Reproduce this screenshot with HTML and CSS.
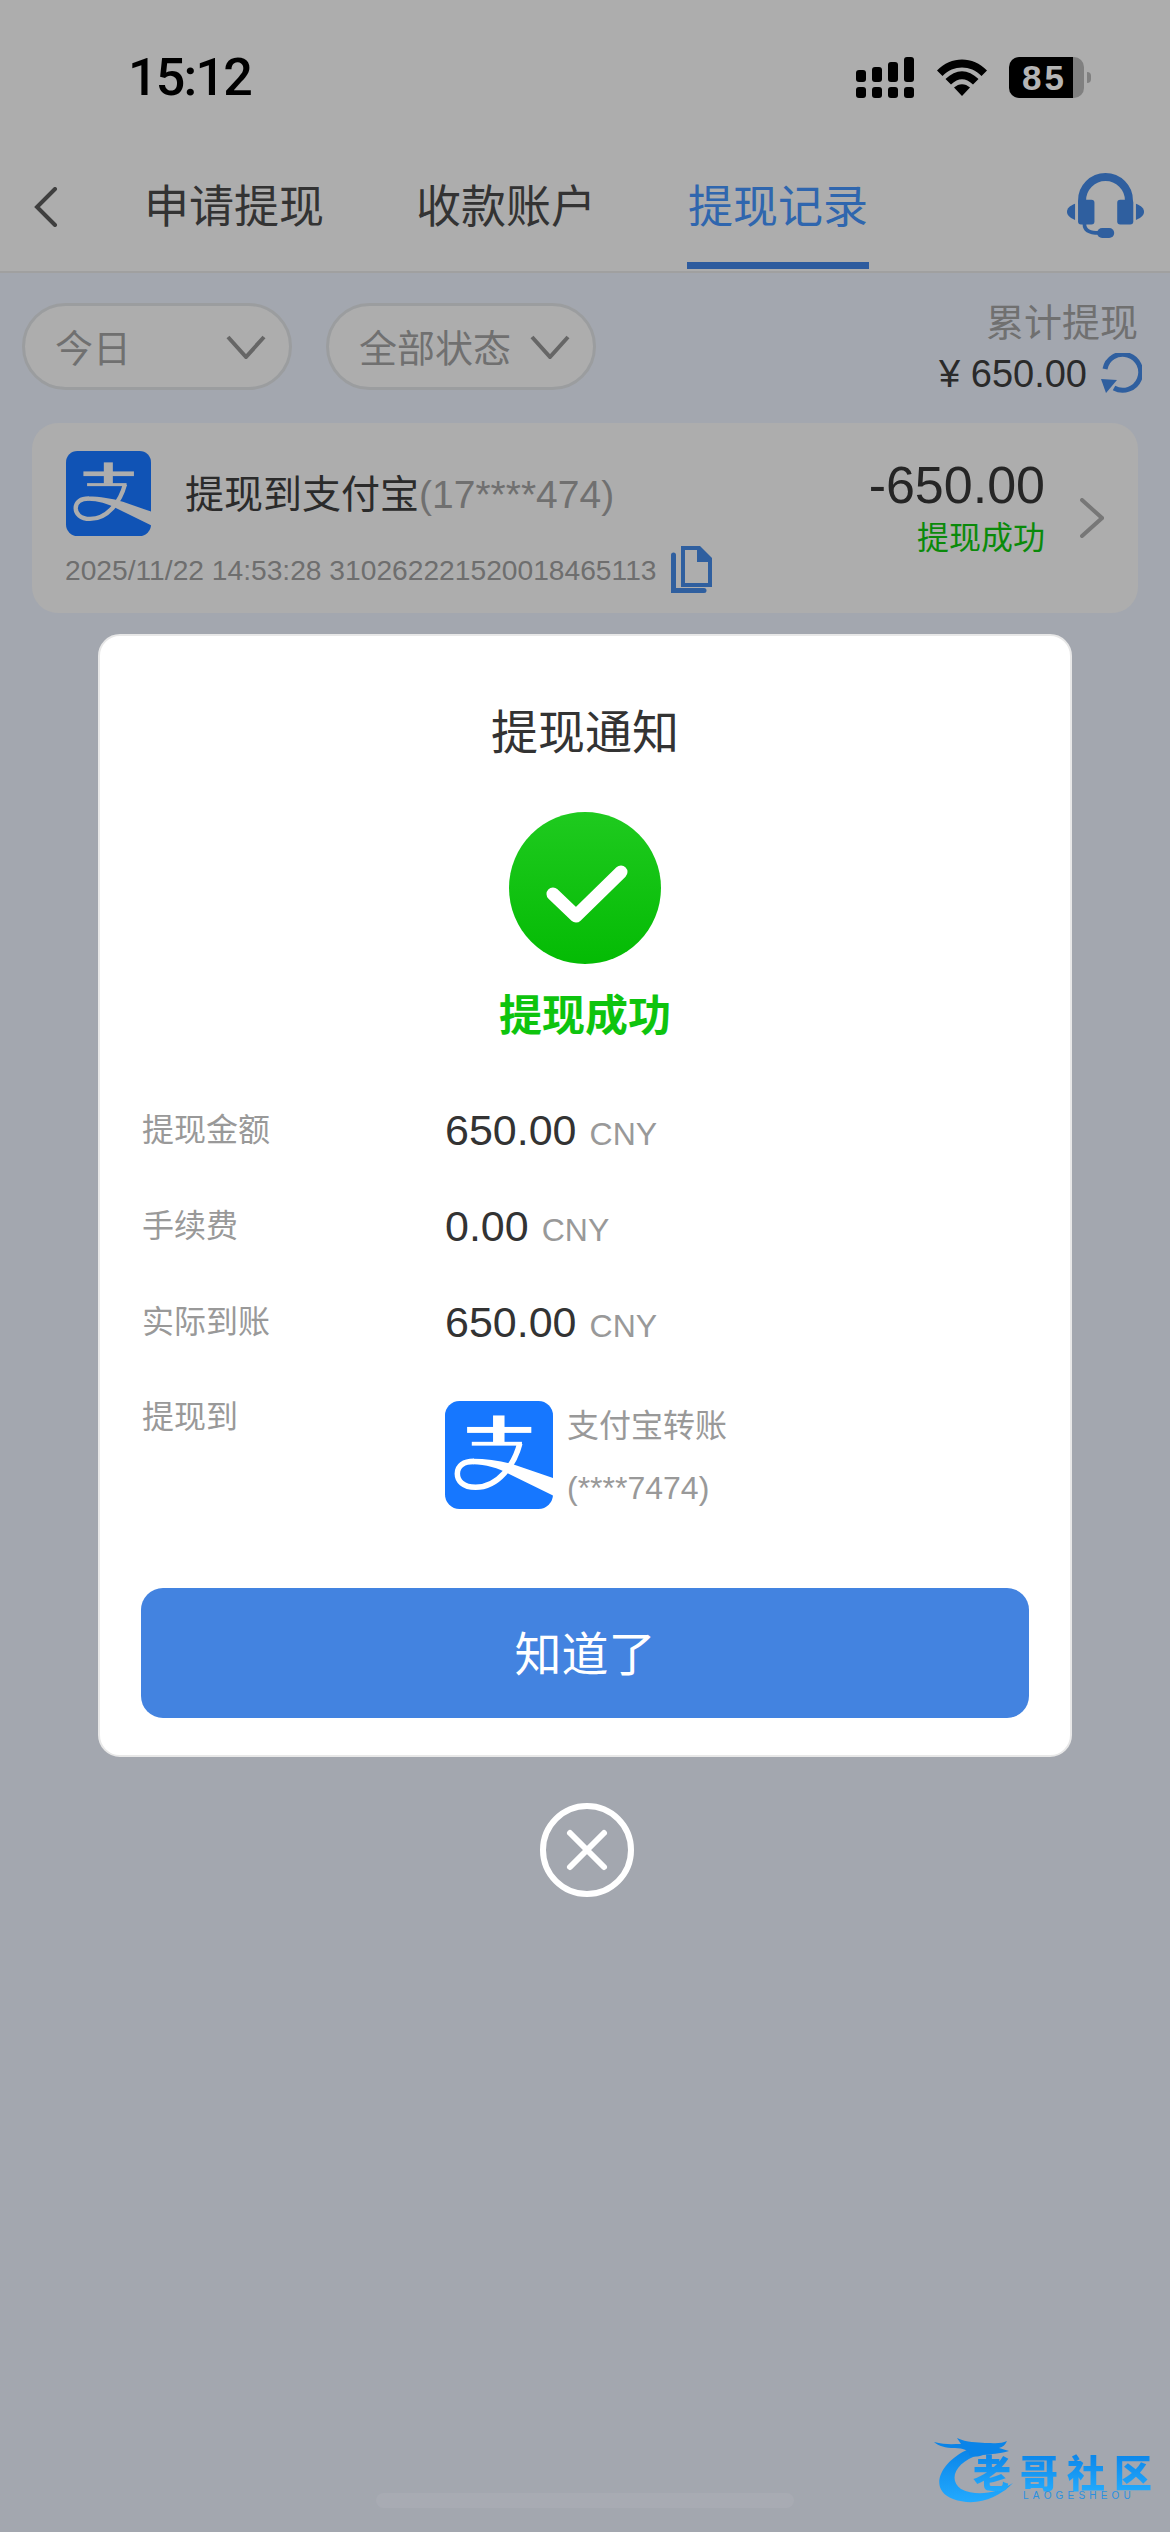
FILE: index.html
```html
<!DOCTYPE html>
<html lang="zh-CN">
<head>
<meta charset="utf-8">
<title>提现记录</title>
<link rel="stylesheet" href="styles.css">
</head>
<body>
<svg class="defs" width="0" height="0" aria-hidden="true">
  <defs>
    <symbol id="alipay-glyph" viewBox="0 0 254 254">
      <g fill="currentColor">
        <rect x="52" y="61" width="151" height="14"/>
        <rect x="113" y="34" width="27" height="64"/>
        <rect x="63" y="96" width="118" height="9"/>
        <path d="M66 136C100 136 140 142 170 152L254 181V222L152 172C125 158 95 149 66 149Z"/>
      </g>
      <path d="M176 100C163 150 125 203 72 203C42 203 29 187 29 171C29 152 44 142 68 142" fill="none" stroke="currentColor" stroke-width="13"/>
    </symbol>
  </defs>
</svg>
<div class="page">
  <header class="topbar">
    <div class="status">
      <span class="time">15:12</span>
      <div class="status-icons">
        <svg class="signal" viewBox="0 0 58 41" width="58" height="41">
          <g fill="#000">
            <rect x="0" y="30" width="10" height="11" rx="3"/><rect x="16" y="30" width="10" height="11" rx="3"/><rect x="32" y="30" width="10" height="11" rx="3"/><rect x="48" y="30" width="10" height="11" rx="3"/>
            <rect x="0" y="13" width="10" height="12" rx="3"/><rect x="16" y="10" width="10" height="15" rx="3"/><rect x="32" y="5" width="10" height="20" rx="3"/><rect x="48" y="0" width="10" height="25" rx="3"/>
          </g>
        </svg>
        <svg class="wifi" viewBox="0 0 50 37" width="50" height="37">
          <path d="M0 11.500C14 -3.200 36 -3.200 50 11.500L44.500 17C33.500 5.700 16.500 5.700 5.500 17Z" fill="#000"/>
          <path d="M8.500 20C19 9.500 31 9.500 41.500 20L36 25.500C28.500 18.500 21.500 18.500 14 25.500Z" fill="#000"/>
          <path d="M17 28.500C22 24 28 24 33 28.500L25 37Z" fill="#000"/>
        </svg>
        <div class="battery"><div class="battery-body"><span class="battery-level">85</span></div><span class="battery-nub"></span></div>
      </div>
    </div>
    <nav class="tabs">
      <svg class="back" viewBox="0 0 25 40" width="25" height="40"><path d="M22 2L4 20L22 38" fill="none" stroke="#3f3f3f" stroke-width="4" stroke-linecap="round"/></svg>
      <div class="tab-list">
        <span class="tab">申请提现</span>
        <span class="tab">收款账户</span>
        <span class="tab tab-active">提现记录</span>
      </div>
      <svg class="headset" viewBox="800 398 230 194" width="77" height="65">
        <g fill="#2f5f9f">
          <path d="M845 490V480A70 70 0 0 1 985 480V490" fill="none" stroke="#2f5f9f" stroke-width="24"/>
          <rect x="833" y="478" width="49" height="74" rx="9"/><rect x="950" y="478" width="48" height="74" rx="9"/>
          <path d="M824 490V538C808 532 800 524 800 514S808 496 824 490Z"/><path d="M1006 490V538C1022 532 1030 524 1030 514S1022 496 1006 490Z"/>
          <path d="M852 550C852 568 864 577 895 577" fill="none" stroke="#2f5f9f" stroke-width="11"/>
          <rect x="890" y="562" width="51" height="30" rx="15"/>
        </g>
      </svg>
    </nav>
  </header>

  <main class="content">
    <section class="filters">
      <div class="pill"><span>今日</span><svg viewBox="0 0 40 24" width="40" height="24"><path d="M2 2L20 22L38 2" fill="none" stroke="#666" stroke-width="4"/></svg></div>
      <div class="pill"><span>全部状态</span><svg viewBox="0 0 40 24" width="40" height="24"><path d="M2 2L20 22L38 2" fill="none" stroke="#666" stroke-width="4"/></svg></div>
      <div class="total">
        <div class="total-label">累计提现</div>
        <div class="total-value"><span>¥ 650.00</span>
          <svg viewBox="0 0 42 42" width="42" height="42"><path d="M5 16A18 18 0 1 1 14 35" fill="none" stroke="#2f5f9f" stroke-width="5"/><path d="M1 26L17 27L6 40Z" fill="#2f5f9f"/></svg>
        </div>
      </div>
    </section>

    <article class="record">
      <div class="record-left">
        <div class="record-head">
          <svg class="alipay alipay-dim" viewBox="0 0 254 254" width="85" height="85"><rect width="254" height="254" rx="34" fill="#1053b5"/><use href="#alipay-glyph"/></svg>
          <div class="record-title">提现到支付宝<span class="record-account">(17****474)</span></div>
        </div>
        <div class="record-meta"><span>2025/11/22 14:53:28 310262221520018465113</span>
          <svg viewBox="0 0 41 47" width="41" height="47"><path d="M2.500 9V44.500H33" fill="none" stroke="#2f5f9f" stroke-width="5" stroke-linecap="round"/><path d="M12 2H27L39 14V39H12Z" fill="none" stroke="#2f5f9f" stroke-width="4"/><path d="M26 0H29L41 12V16H26Z" fill="#2f5f9f"/></svg>
        </div>
      </div>
      <div class="record-right">
        <div class="record-amount">-650.00</div>
        <div class="record-status">提现成功</div>
      </div>
      <svg class="record-arrow" viewBox="0 0 24 40" width="24" height="40"><path d="M2 2L22 20L2 38" fill="none" stroke="#777" stroke-width="4" stroke-linecap="round"/></svg>
    </article>
  </main>

  <div class="home-bar"></div>

  <section class="modal">
    <h2 class="modal-title">提现通知</h2>
    <div class="success-icon">
      <svg viewBox="0 0 82 59" width="82" height="59"><path d="M7 30L30 52L75 8" fill="none" stroke="#fff" stroke-width="13" stroke-linecap="round" stroke-linejoin="round"/></svg>
    </div>
    <div class="success-text">提现成功</div>
    <dl class="details">
      <div class="row"><dt>提现金额</dt><dd><b>650.00</b><i>CNY</i></dd></div>
      <div class="row"><dt>手续费</dt><dd><b>0.00</b><i>CNY</i></dd></div>
      <div class="row"><dt>实际到账</dt><dd><b>650.00</b><i>CNY</i></dd></div>
      <div class="row row-target"><dt>提现到</dt>
        <dd class="target">
          <svg class="alipay" viewBox="0 0 254 254" width="108" height="108"><rect width="254" height="254" rx="34" fill="#1677ff"/><use href="#alipay-glyph"/></svg>
          <div class="target-text"><span>支付宝转账</span><span>(****7474)</span></div>
        </dd>
      </div>
    </dl>
    <button class="confirm" type="button">知道了</button>
  </section>

  <svg class="close" viewBox="0 0 94 94" width="94" height="94"><circle cx="47" cy="47" r="44" fill="none" stroke="#fff" stroke-width="6"/><path d="M30 30L64 64M64 30L30 64" stroke="#fff" stroke-width="6" stroke-linecap="round"/></svg>

  <div class="watermark">
    <svg viewBox="0 0 130 68" width="130" height="68"><defs><linearGradient id="wm" x1="0" y1="0" x2="0" y2="1"><stop offset="0" stop-color="#0a84e8"/><stop offset="1" stop-color="#22aaff"/></linearGradient></defs><path d="M36 12C8 24 -6 52 20 62C42 70 64 62 80 46C64 56 44 60 28 52C14 42 24 24 46 18Z" fill="url(#wm)"/><path d="M1 5C12 8 20 7 28 7L24 1C34 6 44 5 52 6C62 6 68 7 74 4C72 8 70 10 66 11L76 14C66 17 58 17 50 18C44 20 40 20 36 18C38 14 30 11 22 11C12 11 6 9 1 5Z" fill="#0a84e8"/></svg>
    <div class="wm-text">老哥社区</div>
    <div class="wm-sub">LAOGESHEOU</div>
  </div>
</div>
</body>
</html>
```
FILE: styles.css
```css
* { box-sizing: border-box; margin: 0; padding: 0; }
html, body { width: 1170px; height: 2532px; overflow: hidden; }
body { font-family: "Liberation Sans", "Noto Sans CJK SC", sans-serif; background: #a3a7af; }
.defs { position: absolute; }
.page { position: relative; width: 1170px; height: 2532px; }

.topbar { height: 273px; background: #adadad; border-bottom: 2px solid #a0a0a0; }
.status { height: 157px; padding: 57px 79px 0 128px; display: flex; justify-content: space-between; align-items: flex-start; }
.time { font-family: Roboto, "Liberation Sans", sans-serif; font-size: 52px; font-weight: 500; line-height: 41px; color: #000; letter-spacing: -1.800px; }
.status-icons { display: flex; align-items: flex-start; }
.wifi { margin: 2px 0 0 23px; }
.battery { display: flex; align-items: center; margin-left: 22px; }
.battery-body { width: 75px; height: 41px; border-radius: 10px; overflow: hidden; background: linear-gradient(90deg, #000 64px, #808080 64px); padding-left: 13px; }
.battery-level { display: block; font-size: 35px; font-weight: 700; line-height: 41px; color: #b5b5b5; letter-spacing: 3px; }
.battery-nub { width: 4px; height: 11px; margin-left: 3px; background: #808080; border-radius: 0 4px 4px 0; }

.tabs { height: 114px; display: flex; align-items: flex-start; padding-left: 33px; position: relative; }
.back { margin-top: 30px; flex: none; }
.tab-list { display: flex; gap: 90px; margin-left: 85px; }
.tab { width: 182px; height: 112px; padding-top: 21px; text-align: center; font-size: 45px; line-height: 60px; color: #333; white-space: nowrap; }
.tab-active { color: #2f66ae; border-bottom: 7px solid #2d5b9e; }
.headset { margin: 16px 0 0 198px; flex: none; }

.content { padding: 0 32px; }
.filters { display: flex; align-items: flex-start; height: 150px; margin-left: -10px; padding-top: 30px; }
.pill { width: 270px; height: 87px; display: flex; justify-content: space-between; align-items: center; padding: 0 23px 0 30px; margin-right: 34px; border: 3px solid #9b9d9f; border-radius: 44px; background: #adadad; font-size: 38px; color: #707070; }
.pill + .pill { margin-right: 0; }
.pill svg { flex: none; }
.pill span { white-space: nowrap; margin-top: -2px; }
.total { margin-left: auto; margin-right: 0; display: flex; flex-direction: column; align-items: flex-end; margin-top: -5px; }
.total-label { font-size: 38px; line-height: 50px; color: #707070; }
.total-value { display: flex; align-items: center; gap: 13px; margin-top: 4px; margin-right: -4px; font-size: 38px; line-height: 44px; color: #2a2a2a; }
.total-value span { white-space: nowrap; }

.record { width: 1106px; height: 190px; padding: 28px 34px 0 34px; display: flex; align-items: flex-start; background: #adadad; border-radius: 26px; }
.record-left { flex: 1; min-width: 0; }
.record-head { display: flex; align-items: center; }
.alipay { display: block; flex: none; color: #fff; }
.alipay-dim { color: #adadad; }
.record-title { margin-left: 34px; margin-top: 2px; font-size: 39px; line-height: 50px; color: #2b2b2b; white-space: nowrap; }
.record-account { color: #707070; }
.record-meta { display: flex; align-items: flex-start; margin-top: 10px; font-size: 28.200px; line-height: 36px; color: #6e6e6e; white-space: nowrap; }
.record-meta span { margin-top: 6px; margin-left: -1px; }
.record-meta svg { margin-left: 15px; }
.record-right { text-align: right; margin-top: 3px; margin-right: 35px; flex: none; }
.record-amount { font-size: 52px; line-height: 62px; color: #252525; }
.record-status { font-size: 32px; line-height: 44px; color: #0a8a0a; }
.record-arrow { margin-top: 47px; flex: none; }

.home-bar { position: absolute; left: 376px; top: 2493px; width: 418px; height: 15px; border-radius: 8px; background: #a8abb3; }

.modal { position: absolute; left: 98px; top: 634px; width: 974px; height: 1123px; padding: 67px 42px 0; background: #fff; border: 2px solid #e8e8e8; border-radius: 22px; display: flex; flex-direction: column; align-items: center; }
.modal-title { font-size: 47px; font-weight: 400; line-height: 60px; color: #333; }
.success-icon { width: 152px; height: 152px; margin-top: 49px; border-radius: 50%; background: linear-gradient(180deg, #1fca1f, #04bb04); display: flex; align-items: center; justify-content: center; flex: none; }
.success-icon svg { margin: 10px 0 0 4px; }
.success-text { margin-top: 22px; font-size: 43px; font-weight: 700; line-height: 60px; color: #0ec40e; }
.details { width: 100%; margin-top: 54px; }
.row { display: flex; align-items: flex-start; height: 96px; }
.row dt { width: 303px; font-size: 32px; line-height: 60px; color: #999; }
.row dd { display: flex; align-items: baseline; line-height: 60px; }
.row b { font-size: 43px; font-weight: 400; color: #333; }
.row i { margin-left: 13px; font-size: 32px; font-style: normal; color: #999; }
.row-target { height: 108px; margin-top: 12px; }
.row-target dt { margin-top: -13px; }
.row dd.target { align-items: flex-start; margin-top: 1px; }
.target-text { display: flex; flex-direction: column; margin-left: 14px; margin-top: -6px; font-size: 32px; line-height: 62px; color: #999; }
.confirm { width: 888px; height: 130px; margin-top: 80px; padding-bottom: 6px; border: 0; border-radius: 22px; background: #4383e0; color: #fff; font: inherit; font-size: 47px; flex: none; }

.close { position: absolute; left: 540px; top: 1803px; }

.watermark { position: absolute; left: 933px; top: 2437px; width: 225px; height: 70px; }
.watermark svg { position: absolute; left: 0; top: 0; filter: blur(0.6px); }
.wm-text { position: absolute; left: 40px; top: 15px; font-size: 38px; font-weight: 900; line-height: 44px; letter-spacing: 9px; white-space: nowrap; background: linear-gradient(180deg, #0a84e8, #25aeff); -webkit-background-clip: text; background-clip: text; color: transparent; filter: blur(0.6px); }
.wm-sub { position: absolute; left: 90px; top: 53px; font-size: 10px; line-height: 12px; letter-spacing: 4.200px; color: #2a90e0; white-space: nowrap; }
```
